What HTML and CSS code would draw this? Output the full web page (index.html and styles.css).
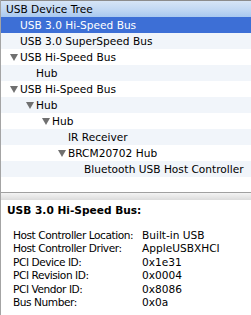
FILE: index.html
```html
<!DOCTYPE html>
<html lang="en">
<head>
    <meta charset="UTF-8">
    <meta name="viewport" content="width=device-width, initial-scale=1.0">
    <title>USB Device Tree</title>
    <link rel="stylesheet" href="styles.css">
</head>
<body>
    <div class="tree">
        <div class="tree-header">USB Device Tree</div>
        <ul class="rows">
            <li class="row selected lvl0">USB 3.0 Hi-Speed Bus</li>
            <li class="row lvl0">USB 3.0 SuperSpeed Bus</li>
            <li class="row lvl0"><span class="arrow"></span>USB Hi-Speed Bus</li>
            <li class="row lvl1">Hub</li>
            <li class="row lvl0"><span class="arrow"></span>USB Hi-Speed Bus</li>
            <li class="row lvl1"><span class="arrow"></span>Hub</li>
            <li class="row lvl2"><span class="arrow"></span>Hub</li>
            <li class="row lvl3">IR Receiver</li>
            <li class="row lvl3"><span class="arrow"></span>BRCM20702 Hub</li>
            <li class="row lvl4">Bluetooth USB Host Controller</li>
        </ul>
    </div>
    <div class="splitter"></div>
    <div class="details">
        <h2>USB 3.0 Hi-Speed Bus:</h2>
        <dl>
            <dt>Host Controller Location:</dt><dd>Built-in USB</dd>
            <dt>Host Controller Driver:</dt><dd>AppleUSBXHCI</dd>
            <dt>PCI Device ID:</dt><dd>0x1e31</dd>
            <dt>PCI Revision ID:</dt><dd>0x0004</dd>
            <dt>PCI Vendor ID:</dt><dd>0x8086</dd>
            <dt>Bus Number:</dt><dd>0x0a</dd>
        </dl>
    </div>
</body>
</html>
```

FILE: styles.css
```css
body {
    margin: 0;
    font-family: 'DejaVu Sans', sans-serif;
    font-size: 10.6px;
    color: #000;
    background: #fff;
    border-left: 1px solid #a4a4a4;
    height: 315px;
    box-sizing: border-box;
    overflow: hidden;
}

.tree {
    height: 192px;
}

.tree-header {
    height: 16px;
    line-height: 16px;
    padding-left: 5px;
    border-top: 1px solid #8c8c8c;
    background: linear-gradient(to bottom, #d6e5f6, #c3d9f3 50%, #a8c8ef);
}

.rows {
    list-style: none;
    margin: 0;
    padding: 0;
}

.row {
    height: 16px;
    line-height: 16px;
    position: relative;
    white-space: nowrap;
}

.row:nth-child(even) {
    background: #f1f5fa;
}

.row.selected {
    background: #3d6fd6;
    color: #fff;
}

.lvl0 { padding-left: 19px; }
.lvl1 { padding-left: 35px; }
.lvl2 { padding-left: 51px; }
.lvl3 { padding-left: 67px; }
.lvl4 { padding-left: 83px; }

.arrow {
    position: absolute;
    margin-left: -10px;
    top: 5px;
    width: 0;
    height: 0;
    border-left: 4px solid transparent;
    border-right: 4px solid transparent;
    border-top: 7px solid #707070;
}

.splitter {
    height: 8px;
    border-top: 1px solid #a0a0a0;
    background: linear-gradient(to bottom, #f4f4f4, #dcdcdc);
    box-sizing: border-box;
}

.details {
    padding: 2px 0 0 6px;
}

.details h2 {
    font-size: 10.6px;
    font-weight: bold;
    margin: 0 0 11px 0;
    line-height: 16px;
}

.details dl {
    display: grid;
    grid-template-columns: 129px auto;
    margin: 0 0 0 6px;
    line-height: 13.4px;
    white-space: nowrap;
}

.details dt {
    margin: 0;
    letter-spacing: -0.45px;
}

.details dd {
    margin: 0;
}
```
